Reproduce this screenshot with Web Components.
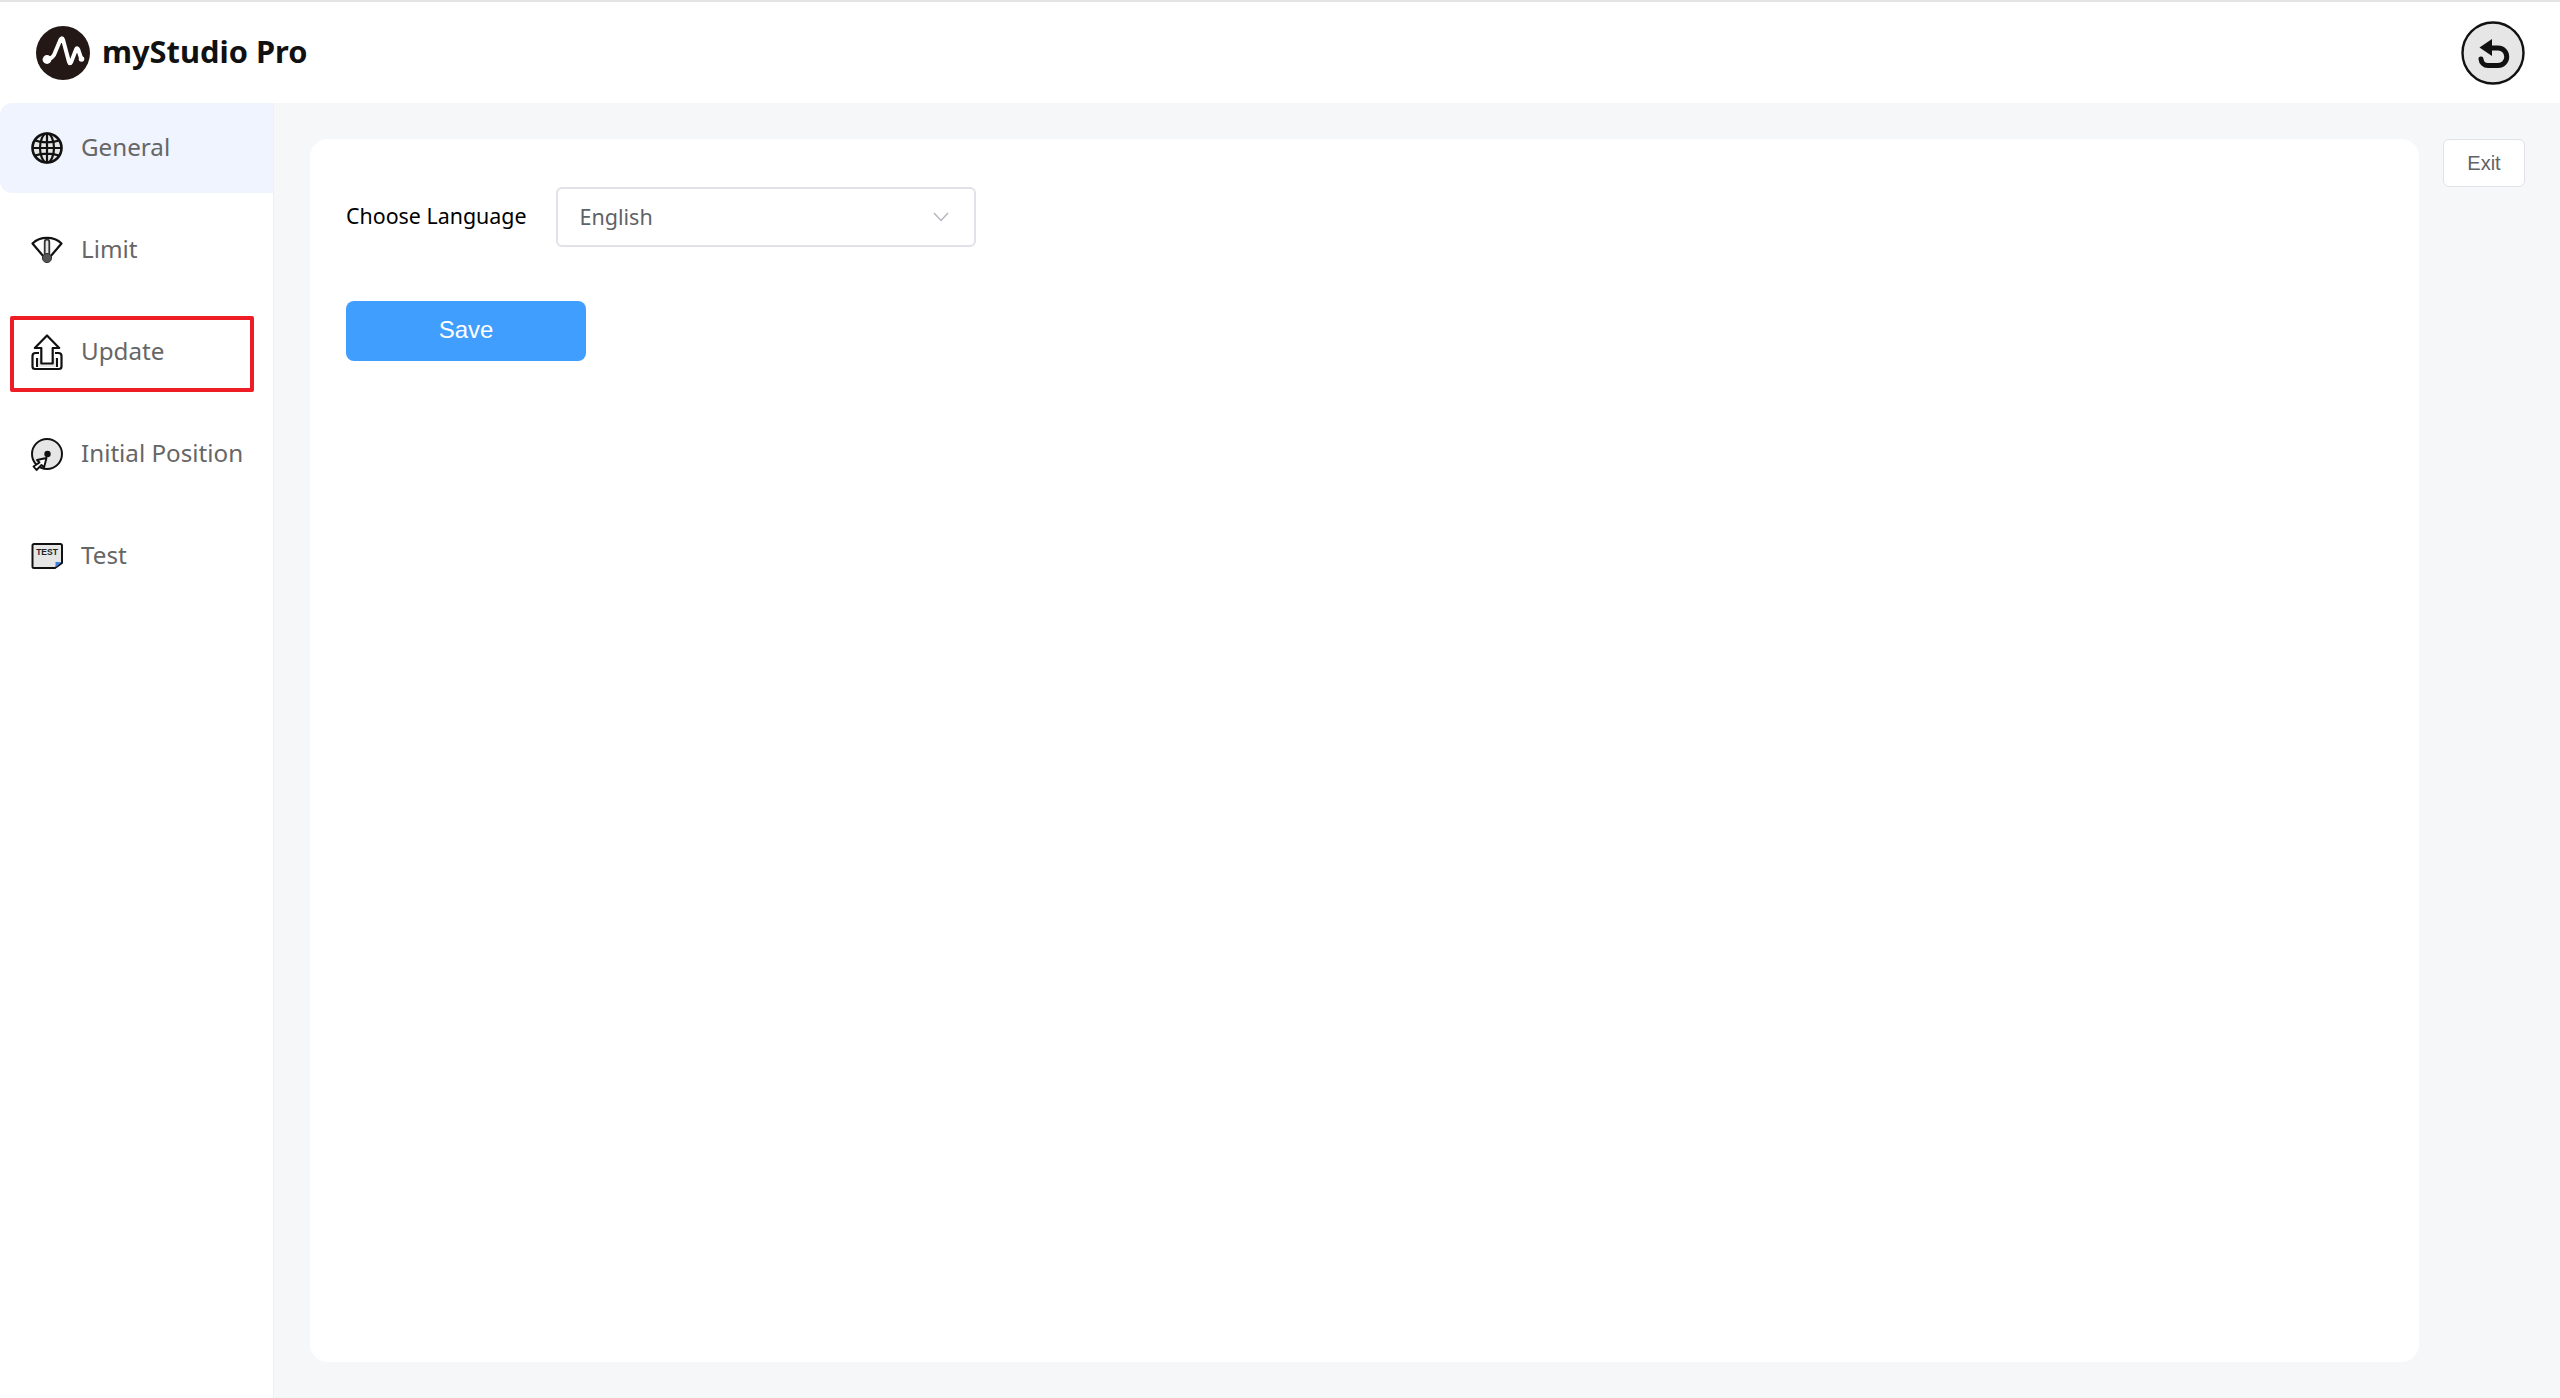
<!DOCTYPE html>
<html lang="en">
<head>
<meta charset="utf-8">
<title>myStudio Pro</title>
<style>
    html, body { margin: 0; height: 100%; }
    body { font-family: "Noto Sans", "Liberation Sans", sans-serif; background: #fff; }
</style>
</head>
<body>
<app-shell>
    <app-header slot="header"></app-header>
    <side-nav slot="nav">
        <nav-item icon="globe" active>General</nav-item>
        <nav-item icon="gauge">Limit</nav-item>
        <nav-item icon="upload">Update</nav-item>
        <nav-item icon="disc">Initial Position</nav-item>
        <nav-item icon="test">Test</nav-item>
    </side-nav>
    <settings-card slot="main"></settings-card>
    <exit-button slot="aside">Exit</exit-button>
</app-shell>

<script>
// Все иконки рисуются в поле 32x36 и центрируются по высоте строки меню
const ICONS = {
    globe: `<g transform="translate(0 2)">
        <circle cx="16" cy="16" r="14.5" fill="#e6e6e6" stroke="#111" stroke-width="2.6"/>
        <ellipse cx="16" cy="16" rx="7" ry="14.5" fill="none" stroke="#111" stroke-width="2.2"/>
        <path d="M16 1.5v29M1.5 16h29M4 8.5c7 2.4 17 2.4 24 0M4 23.5c7-2.4 17-2.4 24 0" fill="none" stroke="#111" stroke-width="2.2"/></g>`,
    gauge: `<path d="M1.5 11.5C9 4 23 4 30.5 11.500L19 25h-6z" fill="#fff" stroke="#111" stroke-width="2.2" stroke-linejoin="round"/>
        <path d="M13.700 25V10a2.300 2.300 0 0 1 4.600 0v15z" fill="#e6e6e6" stroke="#333" stroke-width="1.800"/>
        <circle cx="16" cy="26" r="4.600" fill="#555" stroke="#333" stroke-width="1"/>`,
    upload: `<path d="M8 19H4.500A3 3 0 0 0 1.500 22v10.500a2.500 2.500 0 0 0 2.500 2.500h24a2.500 2.500 0 0 0 2.500-2.500V22a3 3 0 0 0-3-3H24" fill="#fff" stroke="#111" stroke-width="2.200"/>
        <path d="M6 33v-9h20v9z" fill="#e6e6e6"/>
        <path d="M6 24v9M26 24v9" stroke="#111" stroke-width="2"/>
        <path d="M16 1.500 3.800 14h6.500v15.500h11.400V14h6.500z" fill="#fff" stroke="#111" stroke-width="2.200" stroke-linejoin="round"/>`,
    disc: `<g transform="translate(0 2)">
        <circle cx="16" cy="16" r="15" fill="#e6e6e6" stroke="#111" stroke-width="2"/>
        <circle cx="16.500" cy="16" r="3.200" fill="#111"/>
        <path d="M15.500 20 6 22l2.500 2.500-6 4 3 3.500 5-5 2.500 2.500z" fill="#fff" stroke="#111" stroke-width="1.900" stroke-linejoin="round"/></g>`,
    test: `<g transform="translate(0 4.500)">
        <path d="M3 1.500h26.500a1.500 1.500 0 0 1 1.500 1.500v17.500l-7 5H3A1.500 1.500 0 0 1 1.500 24V3A1.500 1.500 0 0 1 3 1.500z" fill="#e6e6e6" stroke="#111" stroke-width="2" stroke-linejoin="round"/>
        <path d="M24.500 19.500h6l-6 5.500z" fill="#3d7fe0"/>
        <text x="16" y="12.500" text-anchor="middle" font-family="'Liberation Sans', sans-serif" font-weight="700" font-size="8.500" fill="#222">TEST</text></g>`,
};

class AppShell extends HTMLElement {
    constructor() {
        super();
        this.attachShadow({ mode: 'open' });
        this.shadowRoot.innerHTML = `
            <style>
                :host { display: grid; grid-template-columns: 274px 1fr; grid-template-rows: 103px 1fr; height: 1398px; overflow: hidden; }
                .top { grid-column: 1 / 3; }
                .nav { background: #fff; border-right: 1px solid #eef0f3; }
                .body { background: #f6f7f9; display: flex; padding: 36px 35px 36px 36px; gap: 24px; min-width: 0; }
                .main { flex: 1; display: flex; min-width: 0; }
                .aside { flex: none; }
            </style>
            <div class="top"><slot name="header"></slot></div>
            <div class="nav"><slot name="nav"></slot></div>
            <div class="body">
                <div class="main"><slot name="main"></slot></div>
                <div class="aside"><slot name="aside"></slot></div>
            </div>
        `;
    }
}

class AppHeader extends HTMLElement {
    constructor() {
        super();
        this.attachShadow({ mode: 'open' });
        this.shadowRoot.innerHTML = `
            <style>
                :host { display: flex; align-items: center; justify-content: space-between; box-sizing: border-box; height: 103px; border-top: 2px solid #e4e4e4; background: #fff; padding: 0 35px 0 36px; }
                .brand { display: flex; align-items: center; gap: 12px; font-size: 30.8px; font-weight: 700; color: #111; }
                .brand span { padding-bottom: 3px; }
                svg { display: block; }
            </style>
            <div class="brand">
                <svg width="54" height="54" viewBox="0 0 54 54">
                    <circle cx="27" cy="27" r="27" fill="#231815"/>
                    <path d="M11 33c3 .5 5-1 7-4l6.500-15.500c.8-1.800 2-1.800 2.500 0l6 22.500c.5 1.800 1.500 1.800 2.200 0l4.800-12.500c.6-1.600 1.600-1.600 2.200 0l3 9" fill="none" stroke="#fff" stroke-width="4" stroke-linecap="round" stroke-linejoin="round"/>
                    <circle cx="11" cy="33.500" r="4.400" fill="#fff"/>
                    <circle cx="45.500" cy="33" r="2.800" fill="#fff"/>
                </svg>
                <span>myStudio Pro</span>
            </div>
            <svg width="64" height="64" viewBox="0 0 64 64">
                <circle cx="32" cy="32" r="30.500" fill="#e6e6e6" stroke="#111" stroke-width="2.400"/>
                <path d="M28 27h9a8.500 8.500 0 0 1 0 17.500H27a7 7 0 0 1-7-6.500" fill="none" stroke="#111" stroke-width="5" stroke-linecap="round"/>
                <path d="M18.500 26.500 31 18v17z" fill="#111"/>
            </svg>
        `;
    }
}

class SideNav extends HTMLElement {
    constructor() {
        super();
        this.attachShadow({ mode: 'open' });
        this.shadowRoot.innerHTML = `
            <style>
                :host { display: flex; flex-direction: column; gap: 12px; position: relative; }
                .mark { position: absolute; left: 10px; top: 213px; width: 244px; height: 76px; box-sizing: border-box; border: 4px solid #ee1c25; border-radius: 2px; pointer-events: none; }
            </style>
            <slot></slot>
            <div class="mark"></div>
        `;
    }
}

class NavItem extends HTMLElement {
    constructor() {
        super();
        this.attachShadow({ mode: 'open' });
        this.shadowRoot.innerHTML = `
            <style>
                :host { display: flex; align-items: center; gap: 17px; height: 90px; padding-left: 30px; border-radius: 12px 0 0 12px; font-size: 24.2px; color: #666; }
                :host([active]) { background: #eff4fe; }
                .ico { width: 34px; height: 36px; flex: none; display: flex; align-items: center; justify-content: center; }
                span { padding-bottom: 3px; }
                svg { display: block; overflow: visible; }
            </style>
            <div class="ico"><svg width="32" height="36" viewBox="0 0 32 36">${this.iconMarkup()}</svg></div>
            <span><slot></slot></span>
        `;
    }

    iconMarkup() {
        return ICONS[this.getAttribute('icon')] || '';
    }
}

class SettingsCard extends HTMLElement {
    constructor() {
        super();
        this.attachShadow({ mode: 'open' });
        this.shadowRoot.innerHTML = `
            <style>
                :host { display: flex; flex-direction: column; flex: 1; align-items: flex-start; background: #fff; border-radius: 18px; padding: 48px 36px; box-sizing: border-box; height: 1223px; }
                .row { display: flex; align-items: center; gap: 29px; margin-bottom: 54px; }
                label { font-size: 21.4px; color: #000; padding-bottom: 3px; }
                .select { display: flex; align-items: center; justify-content: space-between; box-sizing: border-box; width: 420px; height: 60px; padding: 0 25px 0 22px; border: 2px solid #e1e2e9; border-radius: 6px; font-size: 21.5px; color: #606266; }
                .select span { padding-bottom: 1px; }
                button { width: 240px; height: 60px; border: 0; border-radius: 8px; background: #409eff; color: #fff; font: 24px "Liberation Sans", sans-serif; padding: 0 0 2px; }
                svg { display: block; }
            </style>
            <div class="row">
                <label>Choose Language</label>
                <div class="select">
                    <span>English</span>
                    <svg width="16" height="10" viewBox="0 0 16 10"><path d="M1 1l7 7.500L15 1" fill="none" stroke="#b4b7bd" stroke-width="1.500"/></svg>
                </div>
            </div>
            <button>Save</button>
        `;
    }
}

class ExitButton extends HTMLElement {
    constructor() {
        super();
        this.attachShadow({ mode: 'open' });
        this.shadowRoot.innerHTML = `
            <style>
                :host { display: flex; align-items: center; justify-content: center; box-sizing: border-box; width: 82px; height: 48px; background: #fff; border: 1px solid #e1e2e9; border-radius: 6px; font: 20px "Liberation Sans", sans-serif; color: #606266; }
            </style>
            <slot></slot>
        `;
    }
}

customElements.define('app-shell', AppShell);
customElements.define('app-header', AppHeader);
customElements.define('side-nav', SideNav);
customElements.define('nav-item', NavItem);
customElements.define('settings-card', SettingsCard);
customElements.define('exit-button', ExitButton);
</script>
</body>
</html>
